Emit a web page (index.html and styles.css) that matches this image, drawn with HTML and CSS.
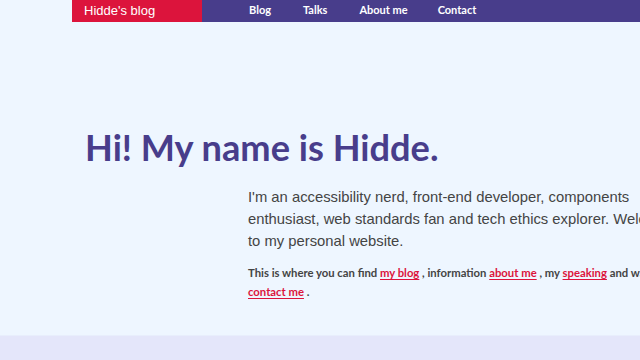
FILE: index.html
```html
<!DOCTYPE html>
<html lang="en">
<head>
<meta charset="utf-8">
<title>Hidde's blog</title>
<link rel="stylesheet" href="styles.css">
</head>
<body>
<header class="site-header">
  <a class="logo" href="#">Hidde's blog</a>
  <nav class="nav">
    <a href="#">Blog</a>
    <a href="#">Talks</a>
    <a href="#">About me</a>
    <a href="#">Contact</a>
  </nav>
</header>
<main class="main">
  <h1 class="title">Hi! My name is Hidde.</h1>
  <div class="intro">
    <p class="lead">I'm an accessibility nerd, front-end developer, components enthusiast, web standards fan and tech ethics explorer. Welcome to my personal website.</p>
    <p class="more">This is where you can find <a href="#">my blog</a> , information <a href="#">about me</a> , my <a href="#">speaking</a> and ways to <a href="#">contact me</a> .</p>
  </div>
</main>
<footer class="band"></footer>
</body>
</html>
```
FILE: styles.css
```css
html, body {
  margin: 0;
  padding: 0;
}
body {
  background: #eef6ff;
  width: 640px;
  height: 360px;
  overflow: hidden;
  display: flex;
  flex-direction: column;
  font-family: "Liberation Sans", Arial, sans-serif;
}
.site-header {
  margin-left: 72px;
  height: 22px;
  display: flex;
  background: #483d8b;
  flex-shrink: 0;
}
.logo {
  width: 130px;
  background: #dc143c;
  color: #fff;
  text-decoration: none;
  font-size: 13px;
  line-height: 22px;
  padding-left: 12px;
  box-sizing: border-box;
}
.nav {
  display: flex;
  padding-left: 47px;
}
.nav a {
  color: #fff;
  text-decoration: none;
  font-family: Lato, "Open Sans", sans-serif;
  font-weight: 700;
  font-size: 11px;
  line-height: 20px;
  margin-right: 32px;
}
.nav a:nth-child(3) {
  margin-right: 30px;
}
.main {
  flex: 1;
  padding-top: 102px;
  overflow: hidden;
}
.title {
  margin: 0 0 0 85px;
  font-family: Lato, "Open Sans", sans-serif;
  font-weight: 700;
  font-size: 36.2px;
  line-height: 46px;
  color: #483d8b;
  white-space: nowrap;
}
.intro {
  margin-left: 248px;
  width: 440px;
}
.lead {
  margin: 16px 0 0;
  font-size: 14.8px;
  line-height: 22px;
  color: #444;
  width: 434px;
}
.more {
  margin: 11px 0 0;
  font-family: Lato, "Open Sans", sans-serif;
  font-weight: 700;
  font-size: 11.3px;
  line-height: 19px;
  color: #444;
}
.more a {
  color: #dc143c;
  text-underline-offset: 2px;
}
.band {
  height: 24px;
  background: #e4e6fa;
  border-top: 1px solid #e8eefc;
  flex-shrink: 0;
}
```
